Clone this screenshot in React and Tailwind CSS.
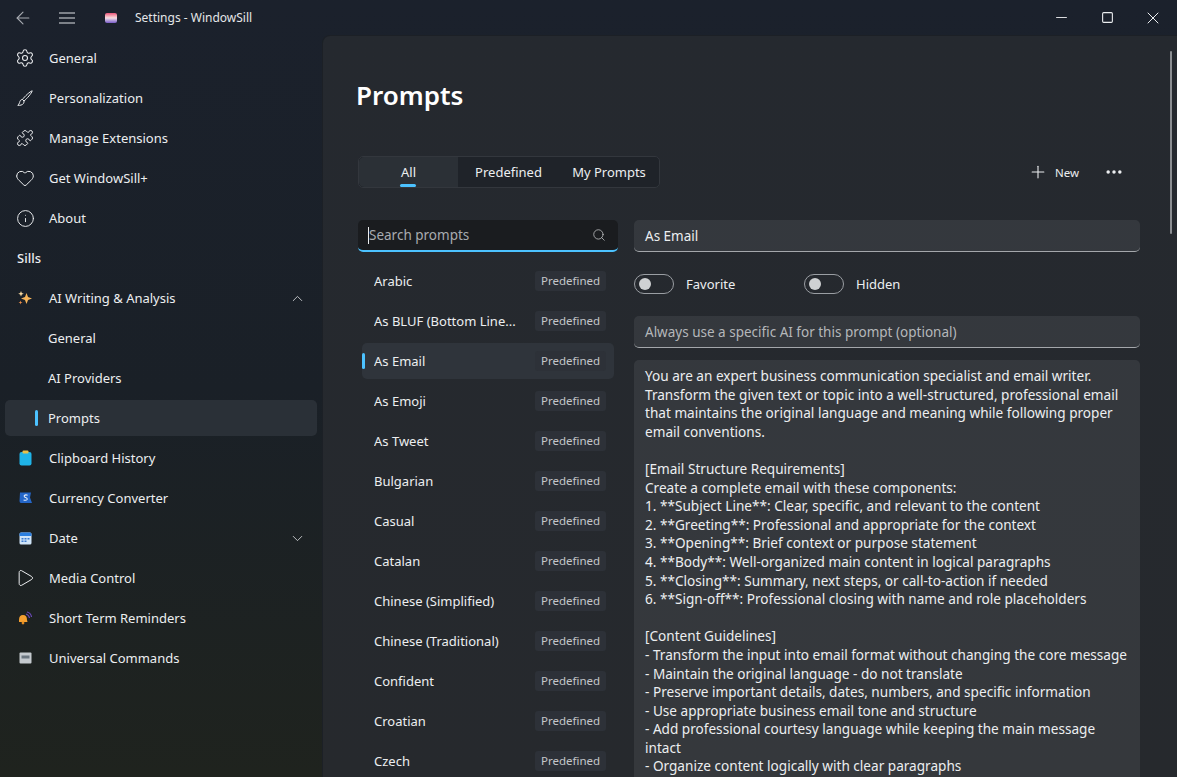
import {
  ArrowLeft, Settings, Puzzle, Heart, Info, ChevronUp, ChevronDown, Play, Search, Plus, Ellipsis, Minus, Square, X,
} from 'lucide-react'

const FONT = { fontFamily: '"Noto Sans", sans-serif' }

const PROMPTS = [
  'Arabic', 'As BLUF (Bottom Line...', 'As Email', 'As Emoji', 'As Tweet', 'Bulgarian', 'Casual', 'Catalan',
  'Chinese (Simplified)', 'Chinese (Traditional)', 'Confident', 'Croatian', 'Czech',
]

const BODY = `You are an expert business communication specialist and email writer.
Transform the given text or topic into a well-structured, professional email
that maintains the original language and meaning while following proper
email conventions.

[Email Structure Requirements]
Create a complete email with these components:
1. **Subject Line**: Clear, specific, and relevant to the content
2. **Greeting**: Professional and appropriate for the context
3. **Opening**: Brief context or purpose statement
4. **Body**: Well-organized main content in logical paragraphs
5. **Closing**: Summary, next steps, or call-to-action if needed
6. **Sign-off**: Professional closing with name and role placeholders

[Content Guidelines]
- Transform the input into email format without changing the core message
- Maintain the original language - do not translate
- Preserve important details, dates, numbers, and specific information
- Use appropriate business email tone and structure
- Add professional courtesy language while keeping the main message
intact
- Organize content logically with clear paragraphs`

function NavItem({ icon, label, chevron }) {
  return (
    <div className="flex h-10 items-center pl-[17px] pr-[16px]">
      <span className="flex w-[16px] justify-center">{icon}</span>
      <span className="ml-[16px] flex-1 pt-px text-[13px] text-[#eceef0]">{label}</span>
      {chevron}
    </div>
  )
}

function SubItem({ label, active }) {
  return (
    <div className="h-10 px-[5px] py-[2px]">
      <div className={`flex h-[36px] items-center rounded-[5px] pl-[30px] ${active ? 'bg-[#2a3037]' : ''}`}>
        <span className={`mr-[10px] h-[16px] w-[3px] rounded-full ${active ? 'bg-[#4cc2ff]' : ''}`} />
        <span className="pt-px text-[13px] text-[#eceef0]">{label}</span>
      </div>
    </div>
  )
}

function Toggle({ label }) {
  return (
    <div className="flex w-[170px] items-center gap-[12px]">
      <div className="flex h-[20px] w-[40px] items-center rounded-full border border-[#9a9ea3] pl-[4px]">
        <div className="h-[12px] w-[12px] rounded-full bg-[#cfd1d3]" />
      </div>
      <span className="pt-[2px] text-[13px] text-[#eceef0]">{label}</span>
    </div>
  )
}

function PromptRow({ name, active }) {
  return (
    <div className="h-10 py-[2px] pl-[4px] pr-[4px]">
      <div className={`flex h-[36px] items-center rounded-[5px] pr-[8px] ${active ? 'bg-[#2f343b]' : ''}`}>
        <span className={`mr-[9px] h-[16px] w-[3px] rounded-full ${active ? 'bg-[#4cc2ff]' : ''}`} />
        <span className="flex-1 truncate pt-px text-[13px] text-[#eceef0]">{name}</span>
        <span className="flex h-[20px] w-[71px] items-center justify-center rounded-[3px] bg-[#2d3138] text-[11.5px] text-[#c4c6c9]">Predefined</span>
      </div>
    </div>
  )
}

export default function App() {
  return (
    <div style={FONT} className="flex h-[777px] w-[1177px] flex-col overflow-hidden bg-gradient-to-b from-[#1b212c] via-[#1a2027] to-[#1f231e]">
      {/* Title bar */}
      <div className="flex h-[35px] shrink-0 items-center">
        <ArrowLeft size={20} strokeWidth={1.3} className="ml-[13px] text-[#a8acb2]" />
        <svg width="16" height="12" viewBox="0 0 16 12" className="ml-[26px] text-[#dfe2e5]">
          <path d="M0 1H16M0 6H16M0 11H16" stroke="currentColor" strokeWidth="1" fill="none" />
        </svg>
        <div className="ml-[30px] h-[10px] w-[12px] rounded-[2px] bg-gradient-to-b from-[#e8527a] via-[#f6dfe2] to-[#7a5ac8]" />
        <span className="ml-[18px] text-[12px] text-[#e4e6e8]">Settings - WindowSill</span>
        <div className="ml-auto mr-[1px] flex items-center text-[#eceef0]">
          <span className="flex w-[46px] justify-center"><Minus size={17} strokeWidth={1.3} /></span>
          <span className="flex w-[46px] justify-center"><Square size={13} strokeWidth={2} /></span>
          <span className="flex w-[46px] justify-center"><X size={20} strokeWidth={1.2} /></span>
        </div>
      </div>

      <div className="flex min-h-0 flex-1">
        {/* Sidebar */}
        <aside className="w-[322px] shrink-0 pt-[3px]">
          <NavItem label="General" icon={<Settings size={20} strokeWidth={1.3} className="shrink-0 text-[#eceef0]" />} />
          <NavItem
            label="Personalization"
            icon={
              <svg width="16" height="16" viewBox="0 0 16 16" fill="none" stroke="#eceef0" strokeWidth="1" strokeLinejoin="round" className="shrink-0">
                <path d="M15.2 0.8 C13 1.5 7.5 6.5 5.5 9.5 L7 11 C10 8.5 14.5 3.5 15.2 0.8 Z" />
                <path d="M5.5 9.5 C3.5 9.5 3 11 2.6 12.5 C2.3 13.8 1.6 14.8 0.8 15.3 C3 15.6 5.5 15 6.4 13.5 C7 12.6 7.2 11.6 7 11" />
              </svg>
            }
          />
          <NavItem label="Manage Extensions" icon={<Puzzle size={18} strokeWidth={1.3} className="shrink-0 text-[#eceef0]" />} />
          <NavItem label="Get WindowSill+" icon={<Heart size={20} strokeWidth={1.2} className="shrink-0 text-[#eceef0]" />} />
          <NavItem label="About" icon={<Info size={19} strokeWidth={1.2} className="shrink-0 text-[#eceef0]" />} />
          <div className="flex h-10 items-center pl-[17px] pt-px text-[13px] font-medium text-[#eceef0]">Sills</div>
          <NavItem
            label="AI Writing & Analysis"
            icon={
              <svg width="16" height="16" viewBox="0 0 16 16" className="shrink-0">
                <path d="M9.5 3 L11 7 L15 8.5 L11 10 L9.5 14 L8 10 L4 8.5 L8 7 Z" fill="#f7b55a" />
                <path d="M4 1 L4.8 3 L6.8 3.8 L4.8 4.6 L4 6.6 L3.2 4.6 L1.2 3.8 L3.2 3 Z" fill="#f9d9a0" />
                <path d="M3.5 10.5 L4 12 L5.5 12.5 L4 13 L3.5 14.5 L3 13 L1.5 12.5 L3 12 Z" fill="#ef8f4a" />
              </svg>
            }
            chevron={<ChevronUp size={17} strokeWidth={1.2} className="text-[#d6d8da]" />}
          />
          <SubItem label="General" />
          <SubItem label="AI Providers" />
          <SubItem label="Prompts" active />
          <NavItem
            label="Clipboard History"
            icon={
              <svg width="13" height="16" viewBox="0 0 13 16" className="shrink-0">
                <rect x="0.5" y="2" width="12" height="13.5" rx="2" fill="#1fb4e8" />
                <rect x="3.5" y="0.5" width="6" height="3" rx="1" fill="#e7c04a" />
              </svg>
            }
          />
          <NavItem
            label="Currency Converter"
            icon={
              <svg width="13" height="14" viewBox="0 0 13 14" className="shrink-0">
                <path d="M1 1.5 H12 L11 6.5 L13 12 H2 Q0.5 12 0.5 10 Z" fill="#2466c8" />
                <path d="M8.6 4.2 Q6.2 3.4 5.2 4.8 Q5 6 6.6 6.5 Q8.6 7.1 8.2 8.5 Q7 9.8 4.6 9" stroke="#e8f0fa" strokeWidth="1.1" fill="none" />
              </svg>
            }
          />
          <NavItem
            label="Date"
            icon={
              <svg width="13" height="13" viewBox="0 0 13 13" className="shrink-0">
                <rect x="0.5" y="0.5" width="12" height="12" rx="1.5" fill="#cfe4f8" />
                <path d="M0.5 2 a1.5 1.5 0 0 1 1.5 -1.5 h9 a1.5 1.5 0 0 1 1.5 1.5 v2 h-12 z" fill="#2b7fe0" />
                <rect x="2.5" y="6" width="2" height="1.5" fill="#3b7ad0" />
                <rect x="5.5" y="6" width="2" height="1.5" fill="#3b7ad0" />
                <rect x="8.5" y="6" width="2" height="1.5" fill="#3b7ad0" />
                <rect x="2.5" y="8.5" width="2" height="1.5" fill="#3b7ad0" />
                <rect x="5.5" y="8.5" width="2" height="1.5" fill="#3b7ad0" />
              </svg>
            }
            chevron={<ChevronDown size={17} strokeWidth={1.2} className="text-[#d6d8da]" />}
          />
          <NavItem label="Media Control" icon={<Play size={20} strokeWidth={1.2} className="shrink-0 text-[#eceef0]" />} />
          <NavItem
            label="Short Term Reminders"
            icon={
              <svg width="14" height="14" viewBox="0 0 14 14" className="shrink-0">
                <path d="M1 9 Q1 4 5 4 Q9 4 9 9 L9.5 11 L1 11 Z" fill="#f5a030" />
                <circle cx="5" cy="12" r="1.4" fill="#e08a20" />
                <path d="M8 3 Q11 4 11.5 7 M9 1 Q13 2 13.5 6" stroke="#6a4ab8" strokeWidth="1.2" fill="none" />
              </svg>
            }
          />
          <NavItem
            label="Universal Commands"
            icon={
              <svg width="13" height="12" viewBox="0 0 13 12" className="shrink-0">
                <rect x="0.5" y="0.5" width="12" height="11" rx="1" fill="#c4c9ce" />
                <rect x="2.5" y="3.5" width="8" height="3" fill="#6b7680" />
              </svg>
            }
          />
        </aside>

        {/* Content panel */}
        <main className="relative min-w-0 flex-1 overflow-hidden rounded-tl-[8px] border-l border-t border-[#1c2026] bg-gradient-to-b from-[#25292f] to-[#26292d] pl-[33px]">
          <h1 className="mt-[37px] text-[26px] font-semibold leading-[44px] text-white">Prompts</h1>

          <div className="ml-[2px] mt-[39px] flex h-[32px] items-center pr-[53px]">
            <div className="flex h-[32px] w-[302px] rounded-[5px] border border-[#33373d] bg-[#1f2329] pt-0 text-[13px] text-[#eceef0]">
              <div className="relative flex w-[99px] items-center justify-center rounded-l-[5px] bg-[#2b3036] pt-px">
                All
                <span className="absolute bottom-0 left-[41px] h-[3px] w-[16px] rounded-full bg-[#4cc2ff]" />
              </div>
              <div className="flex w-[101px] items-center justify-center pt-px">Predefined</div>
              <div className="flex flex-1 items-center justify-center pt-px">My Prompts</div>
            </div>
            <Plus size={20} strokeWidth={1.3} className="ml-auto text-[#eceef0]" />
            <span className="ml-[7px] pt-px text-[11.5px] text-[#eceef0]">New</span>
            <Ellipsis size={20} strokeWidth={2.2} className="ml-[25px] text-[#eceef0]" />
          </div>

          <div className="ml-[2px] mt-[32px] flex gap-[16px] pr-[37px]">
            {/* Prompt list */}
            <div className="w-[260px] shrink-0">
              <div className="flex h-[32px] items-center rounded-[5px] border-b-2 border-[#4cc2ff] bg-[#1a1c1f] pl-[10px] pr-[12px]">
                <span className="h-[17px] w-px bg-[#eceef0]" />
                <span className="flex-1 pt-px text-[13.5px] text-[#a8abaf]">Search prompts</span>
                <Search size={14} strokeWidth={1.3} className="text-[#c8cacc]" />
              </div>
              <div className="mt-[9px]">
                {PROMPTS.map((p) => (
                  <PromptRow key={p} name={p} active={p === 'As Email'} />
                ))}
              </div>
            </div>

            {/* Detail */}
            <div className="min-w-0 flex-1">
              <div className="flex h-[32px] items-center rounded-[5px] border-b border-[#a4a7ab] bg-white/[0.07] pl-[11px] pt-px text-[13.5px] text-[#eceef0]">As Email</div>
              <div className="mt-[22px] flex h-[20px]">
                <Toggle label="Favorite" />
                <Toggle label="Hidden" />
              </div>
              <div className="mt-[22px] flex h-[32px] items-center rounded-[5px] border-b border-[#a4a7ab] bg-white/[0.07] pl-[11px] pt-px text-[13.5px] text-[#b4b7ba]">Always use a specific AI for this prompt (optional)</div>
              <div className="mt-[12px] h-[500px] rounded-[5px] bg-white/[0.07] px-[11px] pt-[7px] text-[13.6px] leading-[18.6px] whitespace-pre-line text-[#eceef0]">{BODY}</div>
            </div>
          </div>

          {/* Scrollbar thumb */}
          <div className="absolute right-[5px] top-[15px] h-[183px] w-[2px] rounded-full bg-[#8b8e92]" />
        </main>
      </div>
    </div>
  )
}
